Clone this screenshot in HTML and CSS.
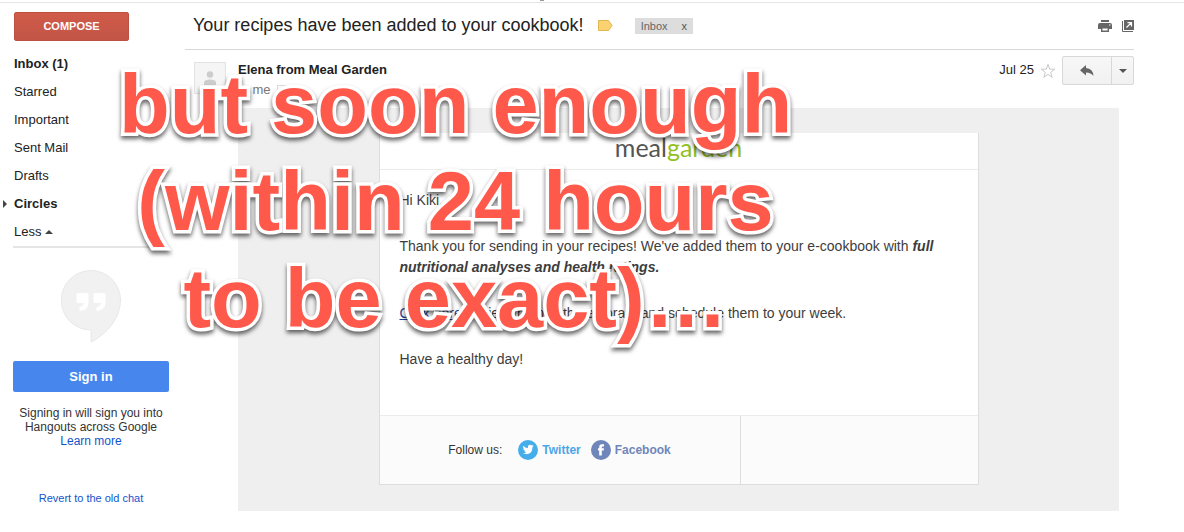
FILE: index.html
```
<!DOCTYPE html>
<html lang="en">
<head>
  <meta charset="UTF-8" />
  <meta name="viewport" content="width=device-width, initial-scale=1.0" />
  <title>Your recipes have been added to your cookbook!</title>
  <link rel="stylesheet" href="styles.css">
</head>
<body>
  <div class="grip"></div>
  <div class="app">
    <aside class="sidebar">
      <button class="compose" type="button">COMPOSE</button>
      <nav class="folders">
        <a class="unread" href="#">Inbox (1)</a>
        <a href="#">Starred</a>
        <a href="#">Important</a>
        <a href="#">Sent Mail</a>
        <a href="#">Drafts</a>
        <a class="unread circles" href="#">Circles</a>
        <a class="less" href="#">Less <span class="arrow-up"></span></a>
      </nav>
      <section class="hangouts">
        <svg class="hangouts-icon" width="60" height="73" viewBox="0 0 60 73">
          <path d="M30 .5A29.5 29.5 0 0 0 30 60V72C46 64 59.500 48 59.500 30A29.500 29.500 0 0 0 30 .5Z" fill="#f1f1f1" stroke="#e8e8e8" />
          <path d="M17 23h9q1.500 0 1.500 1.500V33q0 7-9 8v-4q4-1 4.500-4h-6q-1.500 0-1.500-1.500v-7q0-1.500 1.500-1.500zM34 23h9q1.500 0 1.500 1.500V33q0 7-9 8v-4q4-1 4.500-4h-6q-1.500 0-1.500-1.500v-7q0-1.500 1.500-1.500z" fill="#fff" />
        </svg>
        <button class="signin" type="button">Sign in</button>
        <p>Signing in will sign you into Hangouts across Google<br><a href="#">Learn more</a></p>
        <a class="revert" href="#">Revert to the old chat</a>
      </section>
    </aside>

    <main>
      <header class="subject">
        <h1>Your recipes have been added to your cookbook!</h1>
        <svg class="marker" width="15" height="12" viewBox="0 0 15 12">
          <path d="M.5.5h10l3.500 5-3.500 5H.5z" fill="#fbd271" stroke="#e0b84f" />
        </svg>
        <span class="label">Inbox <button type="button" aria-label="Remove label">x</button></span>
        <div class="tools">
          <button type="button" aria-label="Print">
            <svg width="14" height="13" viewBox="0 0 14 13" fill="#666">
              <path d="M3 0h8v2H3zM2 3h10q2 0 2 2v4h-3V7H3v2H0V5q0-2 2-2z" />
              <path d="M3.700 7.700h6.600v3.600H3.700z" fill="#fff" stroke="#666" stroke-width="1.400" />
              <path d="M11 4.500h1.500v1H11z" fill="#fff" />
            </svg>
          </button>
          <button type="button" aria-label="In new window">
            <svg width="12" height="12" viewBox="0 0 12 12">
              <path d="M2 0h10v10H2z" fill="#666" />
              <path d="M.5 1v10.500H11" fill="none" stroke="#666" />
              <path d="M4.500 7.500l4.500-4.500M5.500 2.600h4v4" fill="none" stroke="#fff" stroke-width="1.200" />
            </svg>
          </button>
        </div>
      </header>

      <article class="message">
        <div class="avatar">
          <svg width="14" height="14" viewBox="0 0 14 14" fill="#ccc">
            <circle cx="7" cy="3.500" r="3.200" />
            <path d="M1 14v-2.500C1 7.500 13 7.500 13 11.500V14z" />
          </svg>
        </div>
        <div class="content">
          <div class="meta">
            <div class="from">
              <strong>Elena from Meal Garden</strong>
              <span class="to">to me <button type="button" aria-label="Show details"></button></span>
            </div>
            <div class="actions">
              <time>Jul 25</time>
              <button class="star" type="button" aria-label="Star">
                <svg width="16" height="16" viewBox="0 0 16 16">
                  <path d="M8 1.300l1.700 4.900h5.100l-4.100 3.100 1.500 5L8 11.300l-4.200 3 1.500-5L1.200 6.200h5.100z" fill="#fff" stroke="#c8c8c8" />
                </svg>
              </button>
              <div class="split">
                <button class="reply" type="button" aria-label="Reply">
                  <svg width="14" height="12" viewBox="0 0 14 12" fill="#666">
                    <path d="M6 0v3q7 .5 7.500 8Q11 7.500 6 7.500v3L0 5.200z" />
                  </svg>
                </button>
                <button class="more" type="button" aria-label="More"><span class="arrow-down"></span></button>
              </div>
            </div>
          </div>

          <div class="mail">
            <div class="card">
              <div class="logo">meal<span>garden</span></div>
              <div class="text">
                <p>Hi Kiki,</p>
                <p>Thank you for sending in your recipes! We've added them to your e-cookbook with <strong>full nutritional analyses and health ratings.</strong></p>
                <p><a href="#">Click here</a> to view them in the eLibrary and schedule them to your week.</p>
                <p>Have a healthy day!</p>
              </div>
              <footer>
                <div class="follow">
                  <span>Follow us:</span>
                  <a class="twitter" href="#">
                    <svg width="20" height="20" viewBox="0 0 20 20">
                      <circle cx="10" cy="10" r="10" fill="#46adeb" />
                      <path d="M5.200 5.800q2 2.300 4.700 2.400-.5-3.200 2.300-3.400 1 0 1.800.8l1.500-.5-1 1.400 1.200-.2-1.300 1.300q.2 6-5.600 6.600-2.200 0-3.900-1.100 2 .1 3.200-.9-1.600-.2-2-1.600h.9q-1.700-.7-1.800-2.300l.9.2q-1.500-1.200-.9-2.700z" fill="#fff" />
                    </svg>
                    Twitter</a>
                  <a class="facebook" href="#">
                    <svg width="20" height="20" viewBox="0 0 20 20">
                      <circle cx="10" cy="10" r="10" fill="#6f86ba" />
                      <path d="M8.200 15.500v-5H7V8.300h1.200V7q0-2.700 2.700-2.700H13v2.200h-1.300q-.9 0-.9.800v1H13l-.3 2.200h-1.900v5z" fill="#fff" />
                    </svg>
                    Facebook</a>
                </div>
              </footer>
            </div>
          </div>
        </div>
      </article>
    </main>
  </div>

  <div class="caption">but soon enough<br>(within 24 hours<br>to be exact)…</div>
</body>
</html>
```

FILE: styles.css
```
* {
  box-sizing: border-box;
}
body {
  margin: 0;
  font-family: "Liberation Sans", Arial, sans-serif;
  font-size: 13px;
  color: #222;
  background-color: #fff;
}
button {
  padding: 0;
  border: none;
  background: none;
  font-family: inherit;
  cursor: pointer;
}
a {
  color: #15c;
  text-decoration: none;
}
svg {
  display: block;
}
.grip {
  width: 4px;
  height: 1px;
  margin: 0 auto 1px 540px;
  background-color: #999;
}
.app {
  display: flex;
  border-top: 1px solid #e5e5e5;
}

/* sidebar */
.sidebar {
  flex: none;
  width: 185px;
  padding: 9px 16px 0 13px;
}
.compose {
  display: block;
  width: 115px;
  height: 29px;
  margin-left: 1px;
  padding-bottom: 2px;
  border: 1px solid #c05040;
  border-radius: 2px;
  background: linear-gradient(#d05b49, #c25547);
  color: #fff;
  font-size: 11px;
  font-weight: bold;
}
.folders {
  display: flex;
  flex-direction: column;
  margin-top: 9px;
  padding-bottom: 1px;
  border-bottom: 2px solid #e5e5e5;
}
.folders a {
  padding-left: 1px;
  line-height: 28px;
  color: #222;
}
.folders .less {
  line-height: 27px;
}
.folders .unread {
  font-weight: bold;
}
.circles {
  position: relative;
}
.circles::before {
  content: "";
  position: absolute;
  left: -10px;
  top: 10px;
  border: 4px solid transparent;
  border-left-color: #444;
  border-right: none;
}
.arrow-up {
  display: inline-block;
  margin-bottom: 2px;
  border: 4px solid transparent;
  border-bottom-color: #444;
  border-top: none;
}
.hangouts {
  display: flex;
  flex-direction: column;
  align-items: center;
  padding-top: 22px;
  text-align: center;
}
.signin {
  width: 100%;
  height: 31px;
  margin-top: 18px;
  border-radius: 2px;
  background-color: #4787ed;
  color: #fff;
  font-size: 13px;
  font-weight: bold;
}
.hangouts p {
  margin: 14px 0 0;
  font-size: 12px;
  line-height: 14px;
  color: #333;
}
.revert {
  margin-top: 44px;
  font-size: 11px;
}

/* message */
main {
  flex: 1;
  margin-right: 50px;
}
.subject {
  display: flex;
  align-items: center;
  height: 47px;
  padding-left: 8px;
  border-bottom: 1px solid #d8d8d8;
}
.subject h1 {
  margin: 0;
  padding-bottom: 2px;
  font-size: 18px;
  font-weight: normal;
}
.marker {
  margin-left: 14px;
}
.label {
  display: flex;
  gap: 14px;
  margin-left: 22px;
  padding: 0 6px;
  background-color: #ddd;
  font-size: 11px;
  line-height: 16px;
  color: #666;
}
.label button {
  font-size: 11px;
  color: #555;
}
.tools {
  display: flex;
  gap: 10px;
  margin-left: auto;
}
.message {
  display: flex;
  padding: 6px 0 0 9px;
}
.avatar {
  display: flex;
  flex: none;
  align-items: center;
  justify-content: center;
  width: 32px;
  height: 32px;
  margin: 6px 12px 0 0;
  border: 1px solid #e2e2e2;
  background-color: #f5f5f5;
}
.content {
  flex: 1;
}
.meta {
  display: flex;
  justify-content: space-between;
  height: 52px;
}
.from {
  display: flex;
  flex-direction: column;
  padding-top: 4px;
  line-height: 20px;
}
.to {
  display: flex;
  gap: 6px;
  align-items: center;
  color: #777;
}
.to button {
  width: 11px;
  height: 11px;
  border: 1px solid #ddd;
}
.actions {
  display: flex;
  align-items: center;
  height: 29px;
}
.actions time {
  padding-bottom: 2px;
}
.star {
  margin: 0 6px;
}
.split {
  display: flex;
  height: 29px;
  border: 1px solid #d8d8d8;
  border-radius: 2px;
  background: linear-gradient(#f7f7f7, #f1f1f1);
}
.split button {
  display: flex;
  align-items: center;
  justify-content: center;
}
.reply {
  width: 48px;
}
.split .more {
  width: 22px;
  border-left: 1px solid #d8d8d8;
}
.arrow-down {
  border: 4px solid transparent;
  border-top-color: #555;
  border-bottom: none;
}

/* mail body */
.mail {
  margin-right: 15px;
  padding: 25px 20px 26px;
  background-color: #efefef;
}
.card {
  max-width: 600px;
  margin: 0 auto;
  border: 1px solid #ddd;
  border-top: none;
  background-color: #fff;
}
.logo {
  height: 37px;
  border-bottom: 1px solid #ececec;
  font-family: Lato, sans-serif;
  font-size: 25px;
  line-height: 28px;
  text-align: center;
  color: #555;
}
.logo span {
  color: #92c01f;
}
.text {
  padding: 20px 20px 45px;
  font-size: 14px;
  line-height: 21px;
  color: #3d3d3d;
}
.text p {
  margin: 0 0 25px;
}
.text p:last-child {
  margin-bottom: 0;
}
.text strong {
  font-style: italic;
}
.text a {
  color: #1c3f94;
  text-decoration: underline;
}
.card footer {
  border-top: 1px solid #ececec;
  background-color: #fbfbfb;
}
.follow {
  display: flex;
  align-items: center;
  justify-content: center;
  width: 361px;
  max-width: 100%;
  height: 68px;
  border-right: 1px solid #ddd;
  font-size: 12px;
  color: #333;
}
.follow a {
  display: flex;
  gap: 4px;
  align-items: center;
  margin-left: 10px;
  font-weight: bold;
}
.follow .twitter {
  margin-left: 16px;
  color: #4ba6e8;
}
.follow .facebook {
  color: #6f86ba;
}

/* caption laid over the whole window */
.caption {
  position: absolute;
  top: 56px;
  left: 119px;
  font-size: 83px;
  font-weight: bold;
  line-height: 97px;
  text-align: center;
  white-space: nowrap;
  color: #ff594c;
  -webkit-text-stroke: 7px #fff;
  paint-order: stroke fill;
  filter: drop-shadow(0 3px 2px rgba(0, 0, 0, 0.6));
  pointer-events: none;
}
```
